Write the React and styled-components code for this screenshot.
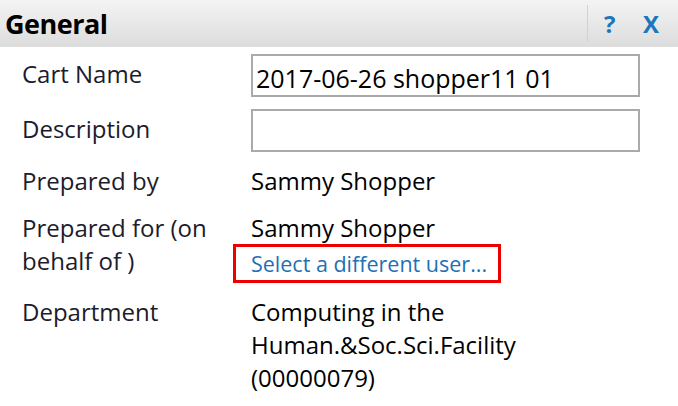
import React from "react";
import styled, { createGlobalStyle } from "styled-components";

const Global = createGlobalStyle`
  html, body { margin: 0; padding: 0; background: #fff; }
  body { font-family: "Open Sans", "Noto Sans", sans-serif; }
`;

const Panel = styled.div`
  width: 678px;
  height: 406px;
  background: #fff;
  overflow: hidden;
`;

const Header = styled.div`
  height: 47px;
  display: flex;
  align-items: center;
  background: linear-gradient(#f4f4f4, #dcdcdc);
  padding-left: 5px;
`;

const Title = styled.h1`
  margin: 0;
  flex: 1;
  font-size: 27px;
  font-weight: 700;
  color: #000;
  letter-spacing: -0.5px;
`;

const Separator = styled.div`
  width: 1px;
  height: 37px;
  background: #d2d2d2;
`;

const HeaderButton = styled.button`
  border: 0;
  background: none;
  padding: 0;
  margin-left: ${(p) => p.$ml}px;
  width: ${(p) => p.$w}px;
  font-family: "Open Sans", sans-serif;
  font-weight: 700;
  font-size: 24px;
  color: #1b76bc;
  cursor: pointer;
  text-align: center;
`;

const Form = styled.div`
  display: grid;
  grid-template-columns: 229px 389px;
  row-gap: 12px;
  padding: 7px 0 0 22px;
  font-size: 24px;
  line-height: 33px;
`;

const Label = styled.div`
  color: #1c1c2c;
  padding-top: ${(p) => p.$pt || 0}px;
  margin-top: ${(p) => p.$mt || 0}px;
`;

const Value = styled.div`
  color: #000;
  margin-top: ${(p) => p.$mt || 0}px;
`;

const TextInput = styled.input`
  box-sizing: border-box;
  width: 389px;
  height: 43px;
  border: 2px solid #aaaaaa;
  padding: 4px 0 0 3px;
  font-family: "Open Sans", sans-serif;
  font-size: 25px;
  color: #000;
  outline: none;
`;

const LinkBox = styled.div`
  width: fit-content;
  margin-left: -18px;
  border: 3px solid #ee0000;
  padding: 0 11px 0 15px;
  line-height: 32px;
`;

const Link = styled.a`
  font-size: 21.5px;
  color: #1f70b3;
  text-decoration: none;
`;

const Line = styled.span`
  display: block;
`;

export default function App() {
  return (
    <Panel>
      <Global />
      <Header>
        <Title>General</Title>
        <Separator />
        <HeaderButton $ml={16} $w={10}>?</HeaderButton>
        <HeaderButton $ml={28} $w={18}>X</HeaderButton>
        <div style={{ width: 18 }} />
      </Header>
      <Form>
        <Label $pt={3}>Cart Name</Label>
        <Value>
          <TextInput defaultValue="2017-06-26 shopper11 01" />
        </Value>
        <Label $pt={3}>Description</Label>
        <Value>
          <TextInput defaultValue="" />
        </Value>
        <Label>Prepared by</Label>
        <Value>Sammy Shopper</Value>
        <Label $mt={2}>
          <Line>Prepared for (on</Line>
          <Line>behalf of )</Line>
        </Label>
        <Value $mt={2}>
          <Line>Sammy Shopper</Line>
          <LinkBox>
            <Link href="#">Select a different user...</Link>
          </LinkBox>
        </Value>
        <Label>Department</Label>
        <Value>
          <Line>Computing in the</Line>
          <Line>Human.&amp;Soc.Sci.Facility</Line>
          <Line>(00000079)</Line>
        </Value>
      </Form>
    </Panel>
  );
}
